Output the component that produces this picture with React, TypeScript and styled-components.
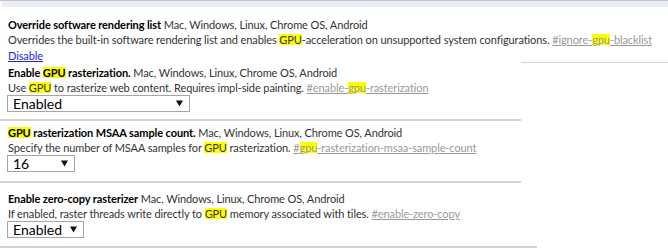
import { FunctionComponent, ReactNode } from "react";
import styled, { createGlobalStyle } from "styled-components";

const GlobalStyle = createGlobalStyle`
  body {
    margin: 0;
    background: #fff;
    font-family: "Segoe UI", Lato, sans-serif;
    font-size: 11px;
    letter-spacing: -0.1px;
    color: #333;
  }
`;

const Mark = styled.span`
  display: inline-block;
  background: #ffff00;
  line-height: 11px;
`;

interface Option {
  value: string;
  width: number;
}

interface Rule {
  from: number;
  to: number;
  gap: number;
  size: number;
}

interface Experiment {
  title: ReactNode;
  platforms: string;
  desc: ReactNode;
  link: ReactNode;
  select?: Option;
  disable?: boolean;
  gapTop: number;
  lineAfter: Rule;
}

const experiments: Experiment[] = [
  {
    title: "Override software rendering list",
    platforms: "Mac, Windows, Linux, Chrome OS, Android",
    desc: (
      <>
        Overrides the built-in software rendering list and enables <Mark>GPU</Mark>
        -acceleration on unsupported system configurations.
      </>
    ),
    link: (
      <>
        #ignore-<Mark>gpu</Mark>-blacklist
      </>
    ),
    disable: true,
    gapTop: 10,
    lineAfter: { from: 521, to: 668, gap: -2, size: 1 },
  },
  {
    title: (
      <>
        Enable <Mark>GPU</Mark> rasterization.
      </>
    ),
    platforms: "Mac, Windows, Linux, Chrome OS, Android",
    desc: (
      <>
        Use <Mark>GPU</Mark> to rasterize web content. Requires impl-side painting.
      </>
    ),
    link: (
      <>
        #enable-<Mark>gpu</Mark>-rasterization
      </>
    ),
    select: { value: "Enabled", width: 183 },
    gapTop: 2,
    lineAfter: { from: 0, to: 521, gap: 7, size: 2 },
  },
  {
    title: (
      <>
        <Mark>GPU</Mark> rasterization MSAA sample count.
      </>
    ),
    platforms: "Mac, Windows, Linux, Chrome OS, Android",
    desc: (
      <>
        Specify the number of MSAA samples for <Mark>GPU</Mark> rasterization.
      </>
    ),
    link: (
      <>
        #<Mark>gpu</Mark>-rasterization-msaa-sample-count
      </>
    ),
    select: { value: "16", width: 68 },
    gapTop: 4,
    lineAfter: { from: 0, to: 521, gap: 9, size: 2 },
  },
  {
    title: "Enable zero-copy rasterizer",
    platforms: "Mac, Windows, Linux, Chrome OS, Android",
    desc: (
      <>
        If enabled, raster threads write directly to <Mark>GPU</Mark> memory
        associated with tiles.
      </>
    ),
    link: "#enable-zero-copy",
    select: { value: "Enabled", width: 77 },
    gapTop: 8,
    lineAfter: { from: 0, to: 537, gap: 8, size: 2 },
  },
];

const Arrow = () => (
  <svg width="7" height="7" viewBox="0 0 7 7">
    <polygon points="0,0.5 7,0.5 3.5,6.5" fill="#111" />
  </svg>
);

const App: FunctionComponent = () => {
  return (
    <Page>
      <GlobalStyle />
      <TopRule />
      <Band />
      {experiments.map((exp, idx) => (
        <div key={idx}>
          <Entry $gap={exp.gapTop}>
            <Title>
              <b>{exp.title}</b> {exp.platforms}
            </Title>
            <Desc>
              {exp.desc} <FlagLink href="#">{exp.link}</FlagLink>
            </Desc>
            {exp.disable && <DisableLink href="#">Disable</DisableLink>}
            {exp.select && (
              <SelectBox style={{ width: exp.select.width }}>
                <span>{exp.select.value}</span>
                <Arrow />
              </SelectBox>
            )}
          </Entry>
          <Divider
            $from={exp.lineAfter.from}
            $to={exp.lineAfter.to}
            $gap={exp.lineAfter.gap}
            $size={exp.lineAfter.size}
          />
        </div>
      ))}
    </Page>
  );
};

const Page = styled.div`
  width: 668px;
  height: 249px;
  overflow: hidden;
`;

const TopRule = styled.div`
  height: 1px;
  background: #c4c4c4;
`;

const Band = styled.div`
  height: 6px;
  margin-left: 2px;
  background: #e9eef9;
`;

const Entry = styled.div<{ $gap: number }>`
  display: flex;
  flex-direction: column;
  align-items: flex-start;
  padding: ${(p) => p.$gap}px 0 0 8px;
`;

const Title = styled.div`
  line-height: 15px;
  white-space: nowrap;
  color: #333;

  b {
    color: #000;
    font-weight: 700;
  }
`;

const Desc = styled.div`
  line-height: 15px;
  white-space: nowrap;
  color: #333;
`;

const FlagLink = styled.a`
  color: #999;
  text-decoration: underline;
`;

const DisableLink = styled.a`
  margin-top: 1px;
  line-height: 16px;
  color: #2424d6;
  text-decoration: underline;
`;

const SelectBox = styled.div`
  box-sizing: border-box;
  height: 17px;
  margin: 0 0 0 -1px;
  padding: 0 6px 0 5px;
  display: flex;
  align-items: center;
  justify-content: space-between;
  border: 1px solid #a6a6a6;
  background: #fff;
  font-size: 14px;
  letter-spacing: 0;
  color: #000;
`;

const Divider = styled.div<{
  $from: number;
  $to: number;
  $gap: number;
  $size: number;
}>`
  height: ${(p) => p.$size}px;
  margin-top: ${(p) => p.$gap}px;
  margin-left: ${(p) => p.$from}px;
  width: ${(p) => p.$to - p.$from}px;
  background: #d2d2d2;
`;

export default App;
